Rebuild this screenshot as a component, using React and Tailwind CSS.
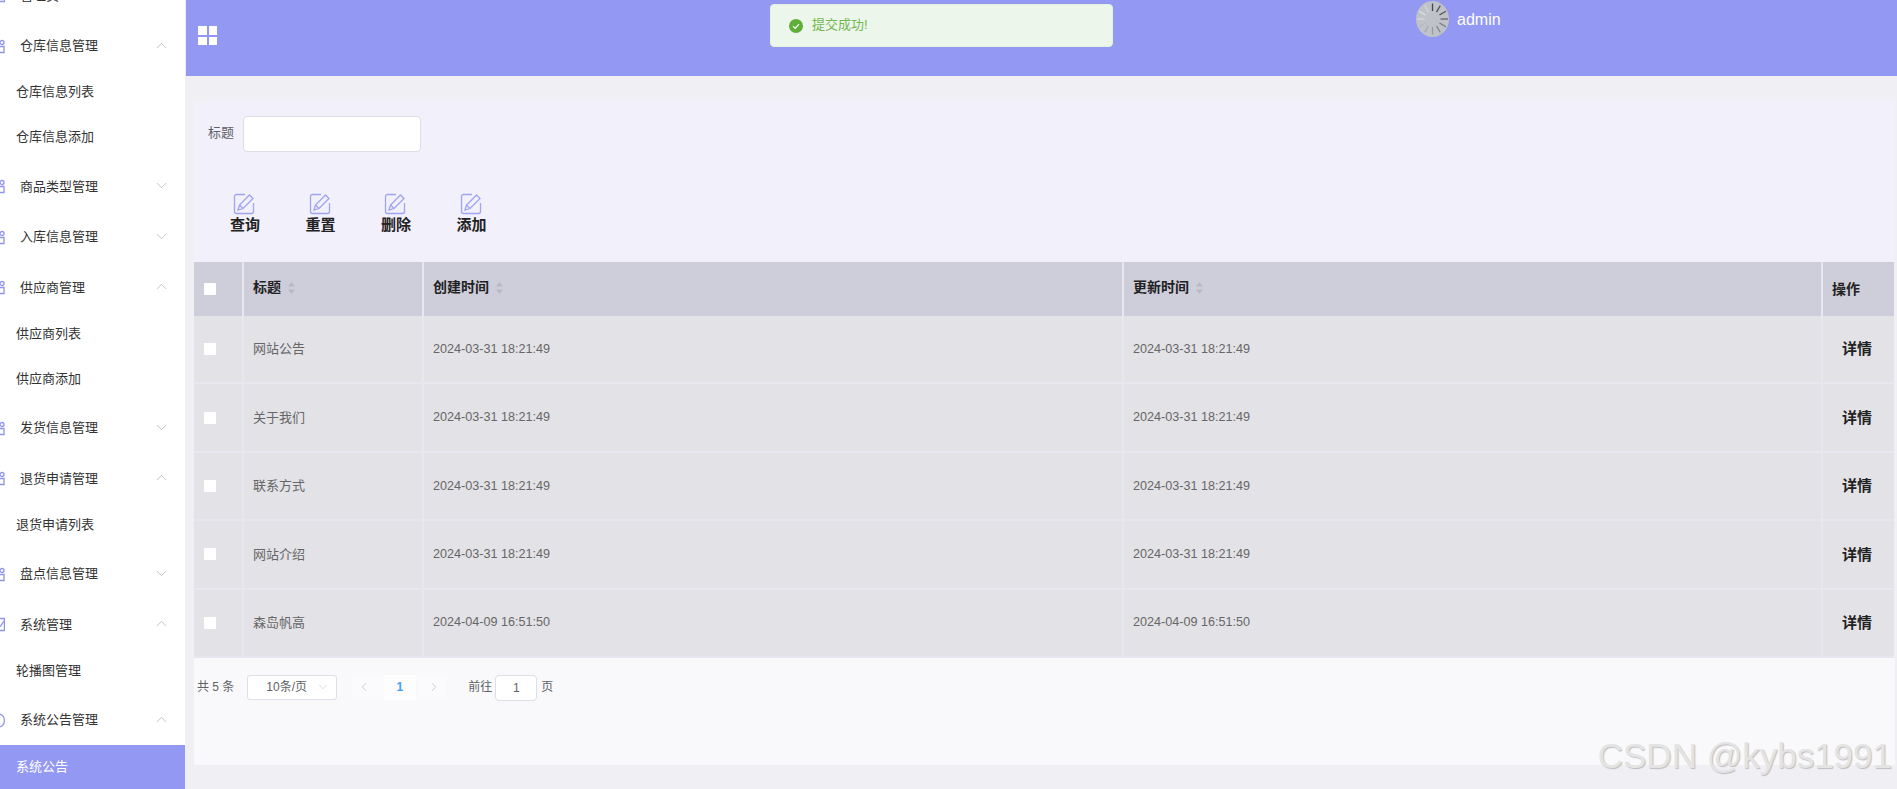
import { ChevronDown, ChevronLeft, ChevronRight, ChevronUp } from "lucide-react";

const FONT = { fontFamily: '"Liberation Sans", "Noto Sans CJK SC", sans-serif' };

const MENU = [
  { label: "仓库信息管理", open: true, icon: "link", subs: ["仓库信息列表", "仓库信息添加"] },
  { label: "商品类型管理", icon: "link" },
  { label: "入库信息管理", icon: "link" },
  { label: "供应商管理", open: true, icon: "link", subs: ["供应商列表", "供应商添加"] },
  { label: "发货信息管理", icon: "link" },
  { label: "退货申请管理", open: true, icon: "link", subs: ["退货申请列表"] },
  { label: "盘点信息管理", icon: "link" },
  { label: "系统管理", open: true, icon: "check", subs: ["轮播图管理"] },
  { label: "系统公告管理", open: true, icon: "info" },
];

const ROWS = [
  ["网站公告", "2024-03-31 18:21:49"],
  ["关于我们", "2024-03-31 18:21:49"],
  ["联系方式", "2024-03-31 18:21:49"],
  ["网站介绍", "2024-03-31 18:21:49"],
  ["森岛帆高", "2024-04-09 16:51:50"],
];

// The sidebar is scrolled sideways in the picture: only the right edge of each icon shows.
function MenuIcon({ kind }) {
  return (
    <svg width="5" height="15" viewBox="0 0 5 15" fill="none" stroke="#8f94ec" strokeWidth="1.3" className="shrink-0">
      {kind === "link" && (
        <>
          <circle cx="2" cy="3.5" r="2" />
          <path d="M0 7.5h4v6H0" />
        </>
      )}
      {kind === "check" && (
        <>
          <path d="M0 1.5h4.4v12H0" />
          <path d="M0 10l4-6" />
        </>
      )}
      {kind === "info" && <path d="M0 1A7 7 0 0 1 0 14" />}
    </svg>
  );
}

function Sidebar() {
  return (
    <aside className="h-[789px] w-[186px] shrink-0 overflow-hidden">
      <div className="w-[185px] bg-white">
        <div className="mt-[-29.75px] flex h-[50.5px] items-center text-[13px] text-[#333]">
          <MenuIcon kind="check" />
          <span className="ml-[15px]">管理员</span>
        </div>
        {MENU.map((m) => (
          <div key={m.label}>
            <div className="flex h-[50.5px] items-center pr-[15px] text-[13px] text-[#333]">
              <MenuIcon kind={m.icon} />
              <span className="ml-[15px] flex-1">{m.label}</span>
              {m.open ? (
                <ChevronUp size={17} strokeWidth={0.8} className="-mt-[2px] text-[#999]" />
              ) : (
                <ChevronDown size={17} strokeWidth={0.8} className="-mt-[2px] text-[#999]" />
              )}
            </div>
            {m.subs?.map((s) => (
              <div key={s} className="flex h-[45px] items-center pb-[4px] pl-4 text-[13px] text-[#333]">
                {s}
              </div>
            ))}
          </div>
        ))}
        <div className="flex h-[45px] items-center bg-[#9398f2] pb-[2px] pl-4 text-[13px] text-white">系统公告</div>
      </div>
    </aside>
  );
}

function EditIcon() {
  return (
    <svg width="22" height="22" viewBox="0 0 22 22" fill="none" stroke="#a0a4f1" strokeWidth="1.3">
      <path d="M12 1.5H3.5a2 2 0 0 0-2 2v15a2 2 0 0 0 2 2h15a2 2 0 0 0 2-2v-8.5" />
      <path d="M5 17l1.5-5L16.5 2l3.5 3.5L10 15.5z" />
      <path d="M6.5 12l3.5 3.5" />
    </svg>
  );
}

function Spinner() {
  const ticks = [0, 30, 60, 90, 120, 150, 180, 210, 240, 270, 300, 330];
  const shades = ["#444", "#555", "#555", "#666", "#777", "#888", "#999", "#a8abb0", "#b5b8bd", "#d5d7da", "#dfe0e3", "#d5d7da"];
  return (
    <svg width="33" height="36" viewBox="0 0 33 36">
      <ellipse cx="16.5" cy="18" rx="16.5" ry="18" fill="#bfc2c9" />
      {ticks.map((a, i) => (
        <line
          key={a}
          x1="16.5"
          y1="2.5"
          x2="16.5"
          y2="10"
          stroke={shades[i]}
          strokeWidth="1.3"
          transform={`rotate(${a} 16.5 18)`}
        />
      ))}
    </svg>
  );
}

function Header() {
  return (
    <header className="relative flex h-[76px] items-start bg-[#9398f2] pl-[12px] pt-[26px]">
      <div className="grid grid-cols-2 gap-[2px]">
        <span className="h-[8.5px] w-[8.5px] bg-white" />
        <span className="h-[8.5px] w-[8.5px] bg-white" />
        <span className="h-[8.5px] w-[8.5px] bg-white" />
        <span className="h-[8.5px] w-[8.5px] bg-white" />
      </div>
      <div className="absolute left-[584px] top-[4px] flex h-[43px] w-[343px] items-center rounded-[4px] border border-[#e1f3d8] bg-[#edf6ea] pl-[18px] text-[13px] text-[#71b850]">
        <svg width="14" height="14" viewBox="0 0 14 14">
          <circle cx="7" cy="7" r="7" fill="#5fae3a" />
          <path d="M4 7.2l2.2 2.2L10 5.2" stroke="#fff" strokeWidth="1.2" fill="none" />
        </svg>
        <span className="ml-[9px] -mt-[2px]">提交成功!</span>
      </div>
      <div className="absolute left-[1230px] top-[1px] flex items-center gap-[8px] text-[16px] text-white">
        <Spinner />
        <span className="mt-[1px]">admin</span>
      </div>
    </header>
  );
}

function SortCaret() {
  return (
    <svg width="7" height="12" viewBox="0 0 7 12" fill="#b9b9c6">
      <path d="M3.5 0L7 4.5H0z" />
      <path d="M3.5 12L0 7.5h7z" />
    </svg>
  );
}

function HeadCell({ className, children }) {
  return (
    <div className={`flex items-center gap-[7px] border-r-2 border-[#e8e7f0] pb-[3px] pl-[9px] text-[14px] font-bold text-[#222] ${className}`}>
      {children}
      <SortCaret />
    </div>
  );
}

function Checkbox() {
  return <span className="block h-[12px] w-[12px] rounded-[1px] bg-white" />;
}

function Table() {
  return (
    <div className="mr-[1px]">
      <div className="flex h-[54px] bg-[#cecdda]">
        <div className="flex w-[50px] items-center border-r-2 border-[#e8e7f0] pl-[10px]">
          <Checkbox />
        </div>
        <HeadCell className="w-[180px]">标题</HeadCell>
        <HeadCell className="w-[700px]">创建时间</HeadCell>
        <HeadCell className="w-[699px]">更新时间</HeadCell>
        <div className="flex flex-1 items-center pl-[9px] text-[14px] font-bold text-[#222]">操作</div>
      </div>
      {ROWS.map((r) => (
        <div key={r[0]} className="flex h-[68.4px] border-b-2 border-[#e8e7f0] bg-[#e3e2e7] text-[13px] text-[#666]">
          <div className="flex w-[50px] items-center border-r-2 border-[#e8e7f0] pl-[10px]">
            <Checkbox />
          </div>
          <div className="flex w-[180px] items-center border-r-2 border-[#e8e7f0] pl-[9px]">{r[0]}</div>
          <div className="flex w-[700px] items-center border-r-2 border-[#e8e7f0] pl-[9px] text-[12.6px]">{r[1]}</div>
          <div className="flex w-[699px] items-center border-r-2 border-[#e8e7f0] pl-[9px] text-[12.6px]">{r[1]}</div>
          <div className="flex flex-1 items-center justify-center pr-[3px] pt-[1px] text-[15px] font-bold text-[#222]">详情</div>
        </div>
      ))}
    </div>
  );
}

function Pager() {
  return (
    <div className="flex h-[107px] items-start bg-[#f9f9fb] pl-[3px] pt-[17px] text-[12px] text-[#606266]">
      <div className="flex h-[25px] items-center">共 5 条</div>
      <div className="ml-[13px] flex h-[25px] w-[90px] items-center justify-between rounded-[3px] border border-[#dcdfe6] bg-white pl-[18px] pr-[6px]">
        10条/页
        <ChevronDown size={14} strokeWidth={1} className="text-[#c0c4cc]" />
      </div>
      <div className="ml-[15px] flex h-[25px] items-center gap-[1px]">
        <span className="flex h-full w-[30px] items-center justify-center bg-[#fbfbfd] pr-[6px]">
          <ChevronLeft size={14} strokeWidth={1.5} className="text-[#c0c4cc]" />
        </span>
        <span className="flex h-full w-[33px] items-center justify-center bg-[#fdfdfe] font-bold text-[#409eff]">1</span>
        <span className="flex h-full w-[30px] items-center justify-center bg-[#fbfbfd] pl-[3px]">
          <ChevronRight size={14} strokeWidth={1.5} className="text-[#c0c4cc]" />
        </span>
      </div>
      <div className="ml-[21px] flex h-[25px] items-center">前往</div>
      <div className="ml-[3px] flex h-[26px] w-[42px] items-center justify-center rounded-[4px] border border-[#dcdfe6] bg-white">1</div>
      <div className="ml-[4px] flex h-[25px] items-center">页</div>
    </div>
  );
}

export default function App() {
  return (
    <div style={FONT} className="relative flex h-[789px] w-[1897px] overflow-hidden bg-[#f0eff4]">
      <Sidebar />
      <main className="min-w-0 flex-1">
        <Header />
        <div className="ml-[8px] mr-[2px] mt-[25px]">
          <div className="h-[161px] bg-[#f1f0fb] pt-[15px]">
            <div className="flex items-center pl-[14px] text-[13px] text-[#606266]">
              <span className="-mt-[2px]">标题</span>
              <div className="ml-[9px] h-[36px] w-[178px] rounded-[4px] border border-[#dcdfe6] bg-white" />
            </div>
            <div className="mt-[41px] flex pl-[39px]">
              {["查询", "重置", "删除", "添加"].map((b) => (
                <div key={b} className="flex w-[75.5px] flex-col items-start">
                  <EditIcon />
                  <span className="-ml-[3px] text-[15px] font-bold leading-[20px] text-[#222]">{b}</span>
                </div>
              ))}
            </div>
          </div>
          <Table />
          <Pager />
        </div>
      </main>
      <div className="pointer-events-none absolute right-[5px] top-[736px] text-[35px] leading-[40px] text-[#e4e4e4] [text-shadow:1px_1px_1px_#bdbdbd]">
        CSDN @kybs1991
      </div>
    </div>
  );
}
